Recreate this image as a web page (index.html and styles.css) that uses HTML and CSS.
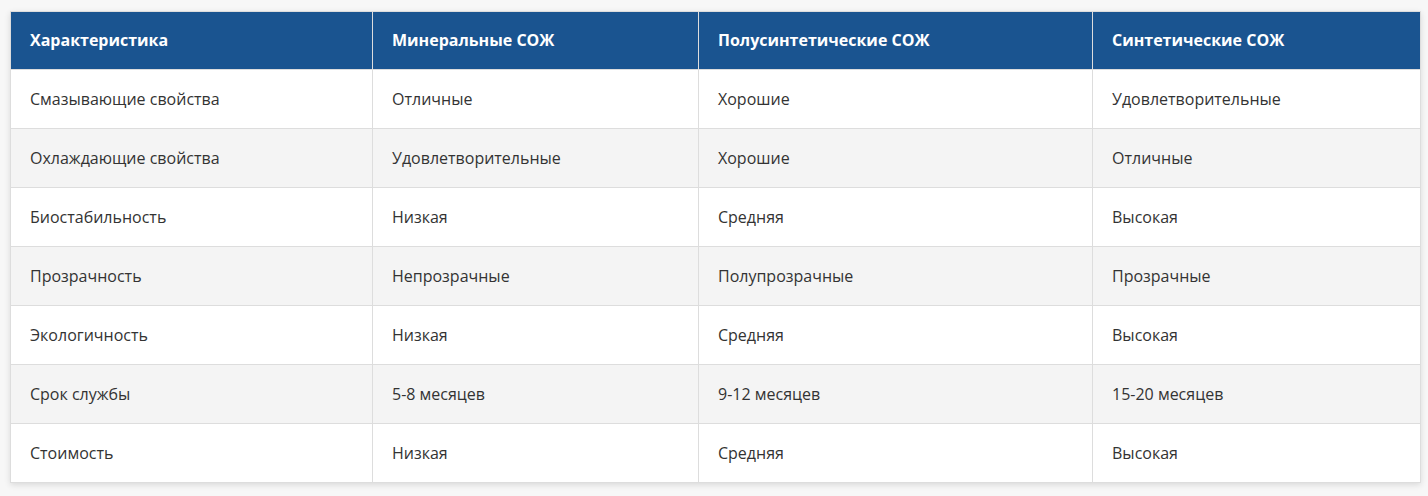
FILE: index.html
```html
<!DOCTYPE html>
<html lang="ru">
<head>
<meta charset="utf-8">
<title>Сравнение СОЖ</title>
<link rel="stylesheet" href="styles.css">
</head>
<body>
<div class="wrap">
<table class="cmp">
  <colgroup>
    <col class="c1"><col class="c2"><col class="c3"><col class="c4">
  </colgroup>
  <thead>
    <tr><th>Характеристика</th><th>Минеральные СОЖ</th><th>Полусинтетические СОЖ</th><th>Синтетические СОЖ</th></tr>
  </thead>
  <tbody>
    <tr><td>Смазывающие свойства</td><td>Отличные</td><td>Хорошие</td><td>Удовлетворительные</td></tr>
    <tr><td>Охлаждающие свойства</td><td>Удовлетворительные</td><td>Хорошие</td><td>Отличные</td></tr>
    <tr><td>Биостабильность</td><td>Низкая</td><td>Средняя</td><td>Высокая</td></tr>
    <tr><td>Прозрачность</td><td>Непрозрачные</td><td>Полупрозрачные</td><td>Прозрачные</td></tr>
    <tr><td>Экологичность</td><td>Низкая</td><td>Средняя</td><td>Высокая</td></tr>
    <tr><td>Срок службы</td><td>5-8 месяцев</td><td>9-12 месяцев</td><td>15-20 месяцев</td></tr>
    <tr><td>Стоимость</td><td>Низкая</td><td>Средняя</td><td>Высокая</td></tr>
  </tbody>
</table>
</div>
</body>
</html>
```

FILE: styles.css
```css
html, body {
  margin: 0;
  padding: 0;
  background: #f7f7f7;
}
body {
  font-family: "Open Sans", "Noto Sans", "DejaVu Sans", sans-serif;
  color: #333;
}
.wrap {
  padding: 11px 8px 10px 10px;
}
.cmp {
  width: 1410px;
  border-collapse: collapse;
  table-layout: fixed;
  background: #fff;
  box-shadow: 0 2px 6px rgba(0, 0, 0, 0.12);
}
.c1 { width: 362px; }
.c2 { width: 326px; }
.c3 { width: 394px; }
.c4 { width: 328px; }
.cmp th,
.cmp td {
  text-align: left;
  padding: 20px 19px;
  line-height: 18px;
  font-size: 16px;
  border: 1px solid #dddddd;
}
.cmp th {
  background: #1a5490;
  color: #fff;
  font-weight: 700;
  border-color: #dddddd;
  padding-top: 19px;
  padding-bottom: 20px;
}
.cmp tbody tr:nth-child(even) td {
  background: #f4f4f4;
}
```
